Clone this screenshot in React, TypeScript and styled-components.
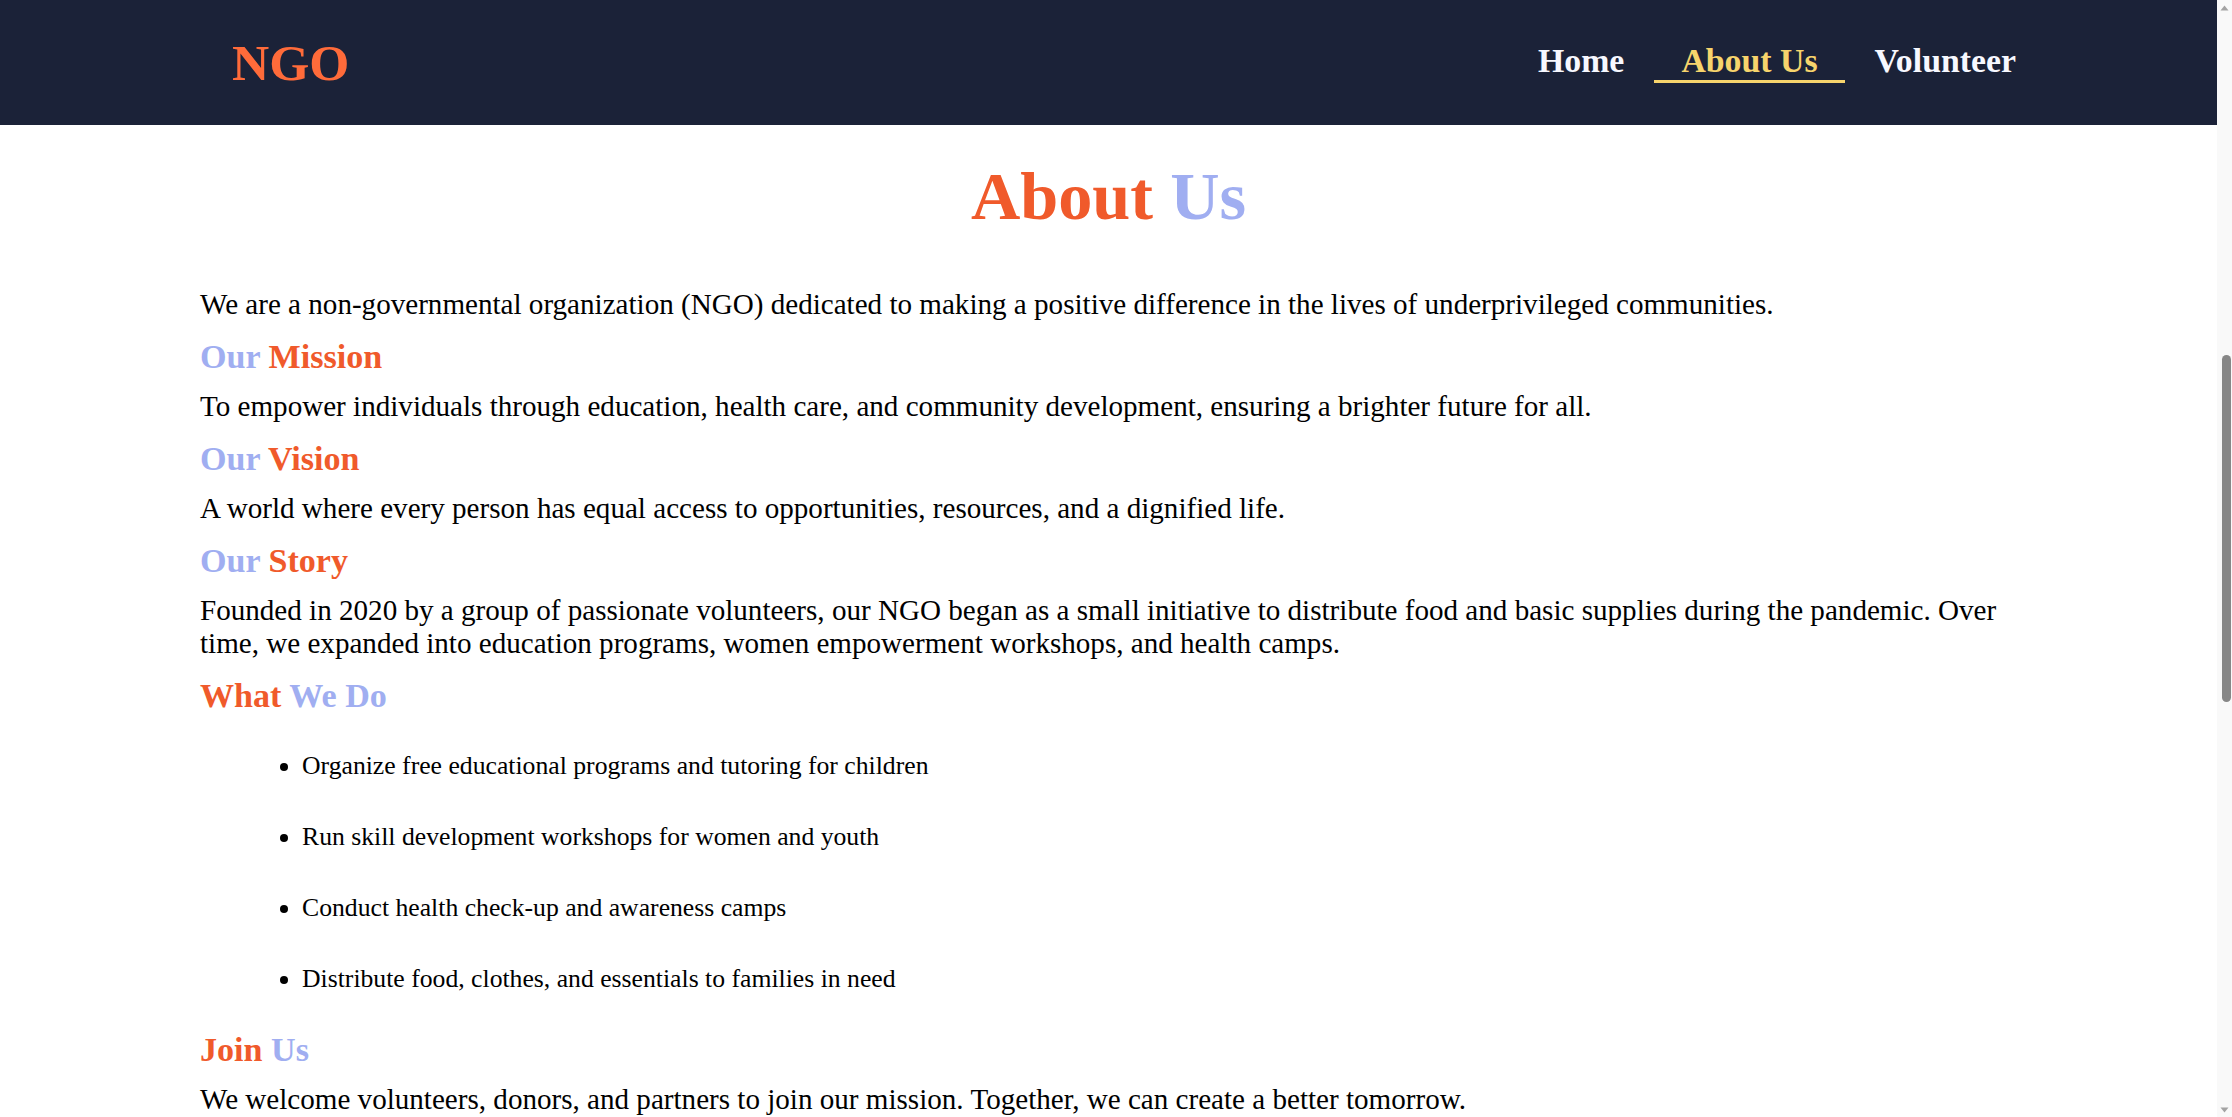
import React from "react";
import styled, { createGlobalStyle } from "styled-components";

const GlobalStyle = createGlobalStyle`
  html, body {
    margin: 0;
    padding: 0;
    background: #ffffff;
  }
  body {
    font-family: "Liberation Serif", "Times New Roman", serif;
    color: #000000;
  }
  * { box-sizing: border-box; }
`;

const Viewport = styled.div`
  display: flex;
  height: 100vh;
  overflow: hidden;
`;

const Page = styled.div`
  flex: 1;
  min-width: 0;
  overflow: hidden;
`;

const Header = styled.header`
  height: 125px;
  background: #1b2238;
  display: flex;
  align-items: center;
  justify-content: space-between;
  padding: 0 174px 0 232px;
`;

const Logo = styled.div`
  font-family: "Liberation Serif", "Times New Roman", serif;
  font-weight: 700;
  font-size: 51.5px;
  color: #ff6b3a;
`;

const Nav = styled.nav`
  display: flex;
  align-items: center;
  gap: 3px;
`;

const NavLink = styled.a<{ $active?: boolean }>`
  font-family: "Liberation Serif", "Times New Roman", serif;
  font-weight: 700;
  font-size: 33.8px;
  padding: 0 27px;
  text-decoration: none;
  color: ${(p) => (p.$active ? "#f7d46c" : "#f7f8ff")};
  border-bottom: 3px solid ${(p) => (p.$active ? "#f7d46c" : "transparent")};
  cursor: pointer;
`;

const Section = styled.section`
  padding: 32px 200px 40px;
`;

const Title = styled.h1`
  margin: 0 0 52px;
  text-align: center;
  font-size: 68.3px;
  font-weight: 700;
`;

const Accent = styled.span<{ $tone: "orange" | "blue" }>`
  color: ${(p) => (p.$tone === "orange" ? "#f05a2b" : "#a0aef1")};
`;

const Heading = styled.h2`
  margin: 17px 0 14px;
  font-size: 34.1px;
  font-weight: 700;
`;

const Text = styled.p`
  margin: 14px 0;
  font-size: 29.1px;
`;

const List = styled.ul`
  margin: 15px 0 0;
  padding-left: 102px;
  list-style: disc;
`;

const Item = styled.li`
  padding: 20.5px 0;
  font-size: 25.7px;
`;

const ScrollRail = styled.div`
  width: 15px;
  flex: none;
  display: flex;
  flex-direction: column;
  background: #f9f9f9;
`;

const ArrowBox = styled.div`
  height: 15px;
  flex: none;
  display: flex;
  align-items: center;
  justify-content: center;
  color: #a3a3a3;
`;

const Track = styled.div`
  flex: 1;
  display: flex;
  flex-direction: column;
`;

const Thumb = styled.div`
  margin-left: 5px;
  width: 9px;
  border-radius: 5px;
  background: #878787;
`;

const Arrow = ({ up }: { up?: boolean }) => (
  <svg width="9" height="6" viewBox="0 0 9 6" aria-hidden="true">
    <path d={up ? "M0.5 5.5 L4.5 0.5 L8.5 5.5 Z" : "M0.5 0.5 L4.5 5.5 L8.5 0.5 Z"} fill="currentColor" />
  </svg>
);

export default function App() {
  const thumbTop = 340;
  const thumbHeight = 347;

  return (
    <>
      <GlobalStyle />
      <Viewport>
        <Page>
          <Header>
            <Logo>NGO</Logo>
            <Nav>
              <NavLink>Home</NavLink>
              <NavLink $active>About Us</NavLink>
              <NavLink>Volunteer</NavLink>
            </Nav>
          </Header>
          <Section id="about">
            <Title>
              <Accent $tone="orange">About</Accent> <Accent $tone="blue">Us</Accent>
            </Title>
            <Text>
              We are a non-governmental organization (NGO) dedicated to making a positive difference in the lives of underprivileged communities.
            </Text>
            <Heading>
              <Accent $tone="blue">Our</Accent> <Accent $tone="orange">Mission</Accent>
            </Heading>
            <Text>
              To empower individuals through education, health care, and community development, ensuring a brighter future for all.
            </Text>
            <Heading>
              <Accent $tone="blue">Our</Accent> <Accent $tone="orange">Vision</Accent>
            </Heading>
            <Text>
              A world where every person has equal access to opportunities, resources, and a dignified life.
            </Text>
            <Heading>
              <Accent $tone="blue">Our</Accent> <Accent $tone="orange">Story</Accent>
            </Heading>
            <Text>
              Founded in 2020 by a group of passionate volunteers, our NGO began as a small initiative to distribute food and basic supplies during the pandemic. Over time, we expanded into education programs, women empowerment workshops, and health camps.
            </Text>
            <Heading>
              <Accent $tone="orange">What</Accent> <Accent $tone="blue">We Do</Accent>
            </Heading>
            <List>
              <Item>Organize free educational programs and tutoring for children</Item>
              <Item>Run skill development workshops for women and youth</Item>
              <Item>Conduct health check-up and awareness camps</Item>
              <Item>Distribute food, clothes, and essentials to families in need</Item>
            </List>
            <Heading>
              <Accent $tone="orange">Join</Accent> <Accent $tone="blue">Us</Accent>
            </Heading>
            <Text>
              We welcome volunteers, donors, and partners to join our mission. Together, we can create a better tomorrow.
            </Text>
          </Section>
        </Page>
        <ScrollRail aria-hidden="true">
          <ArrowBox>
            <Arrow up />
          </ArrowBox>
          <Track>
            <Thumb style={{ marginTop: thumbTop, height: thumbHeight }} />
          </Track>
          <ArrowBox>
            <Arrow />
          </ArrowBox>
        </ScrollRail>
      </Viewport>
    </>
  );
}
